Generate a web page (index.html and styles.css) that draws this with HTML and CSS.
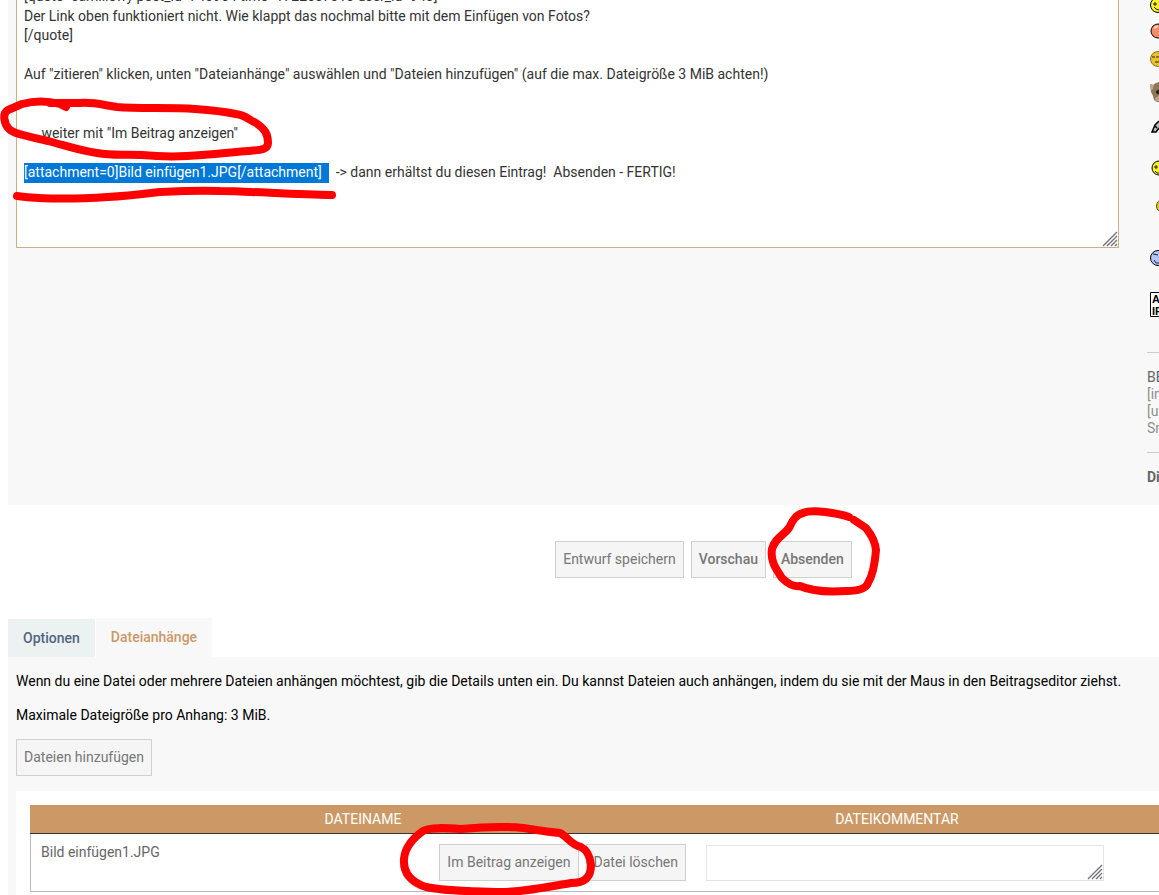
FILE: index.html
```html
<!DOCTYPE html>
<html lang="de">
<head>
<meta charset="utf-8">
<title>Antwort schreiben</title>
<link rel="stylesheet" href="styles.css">
</head>
<body>
<main class="page">
  <section class="editor">
    <div class="message">
      <textarea class="message-text" id="message" aria-label="Nachricht" spellcheck="false">[quote=camillewy post_id=743964 time=1722637313 user_id=943]
Der Link oben funktioniert nicht. Wie klappt das nochmal bitte mit dem Einfügen von Fotos?
[/quote]

Auf "zitieren" klicken, unten "Dateianhänge" auswählen und "Dateien hinzufügen" (auf die max. Dateigröße 3 MiB achten!)


     weiter mit "Im Beitrag anzeigen"

[attachment=0]Bild einfügen1.JPG[/attachment]  &nbsp;&nbsp;-&gt; dann erhältst du diesen Eintrag!  Absenden - FERTIG!</textarea>
      <svg class="grip" viewBox="0 0 16 16" aria-hidden="true"><path d="M1 15 15 1M5 15 15 5M9 15 15 9M13 15 15 13"/></svg>
    </div>
    <aside class="sidebar">
      <svg class="smilies" viewBox="0 0 12 340" role="img" aria-label="Smilies">
        <g stroke="#000">
          <circle cx="11" cy="5" r="7.5" fill="#f7f126"/>
          <circle cx="11" cy="31" r="7" fill="#f78a68"/>
          <circle cx="11" cy="59" r="7.5" fill="#e8c32c" stroke="#8a721c"/>
          <circle cx="12" cy="168" r="7" fill="#f7f126"/>
          <circle cx="16" cy="206" r="6.5" fill="#dfc51d" stroke="#5e5210"/>
          <circle cx="11" cy="258" r="7.5" fill="#b3c5fa"/>
          <path d="M3.500 292.500H14V316.500H3.500Z" fill="#fff"/>
        </g>
        <path d="M7 3h2v2H7zM7 7l2 2 3 1M8 166h2v2H8zM8 171l2 2h2M6 254l5 1M7 260l2 3h3M5 57h3M9 57h3M8 62h4" fill="none" stroke="#222"/>
        <path d="M7 28l4-2" stroke="#ffd4bd" stroke-width="2"/>
        <path d="M3 84l3 1 3-2 3-1v20H10l-3-2-1-4-2-4Z" fill="#8e7658"/>
        <path d="M3 84l4 1-1 4-2 1Z" fill="#b8a78c"/><circle cx="11" cy="92" r="2" fill="#241c15"/><path d="M8 98l4-2v5H9Z" fill="#c4a58a"/>
        <path d="M12 121l-4 4-3 7h4l3-4M8 126l2 2" fill="#bbb" stroke="#000" stroke-width="1.500"/>
        <text class="pixel-word" x="5" y="303">A</text><text class="pixel-word" x="5" y="315">IR</text>
      </svg>
      <div class="status">
        <span class="status-strong">BBCode</span><br>[img]<br>[url]<br>Smilies
      </div>
      <div class="history">Die</div>
    </aside>
  </section>

  <div class="actions">
    <button class="button" type="button">Entwurf speichern</button>
    <button class="button button-strong" type="button">Vorschau</button>
    <button class="button button-strong" type="submit">Absenden</button>
  </div>

  <nav class="tabs">
    <a class="tab" href="#options">Optionen</a>
    <a class="tab tab-active" href="#attachments">Dateianhänge</a>
  </nav>

  <section class="attachments" id="attachments">
    <p class="hint">Wenn du eine Datei oder mehrere Dateien anhängen möchtest, gib die Details unten ein. Du kannst Dateien auch anhängen, indem du sie mit der Maus in den Beitragseditor ziehst.</p>
    <p class="hint">Maximale Dateigröße pro Anhang: 3 MiB.</p>
    <button class="button button-add" type="button">Dateien hinzufügen</button>
    <div class="files">
      <table class="file-table">
        <colgroup><col class="col-name"><col class="col-comment"><col></colgroup>
        <thead>
          <tr><th>DATEINAME</th><th>DATEIKOMMENTAR</th><th></th></tr>
        </thead>
        <tbody>
          <tr>
            <td>
              <div class="file">
                <span class="file-name">Bild einfügen1.JPG</span>
                <div class="file-actions">
                  <button class="button" type="button">Im Beitrag anzeigen</button>
                  <button class="button" type="button">Datei löschen</button>
                </div>
              </div>
            </td>
            <td>
              <div class="comment">
                <textarea class="comment-text" aria-label="Dateikommentar"></textarea>
                <svg class="grip" viewBox="0 0 16 16" aria-hidden="true"><path d="M1 15 15 1M5 15 15 5M9 15 15 9M13 15 15 13"/></svg>
              </div>
            </td>
            <td></td>
          </tr>
        </tbody>
      </table>
    </div>
  </section>

  <svg class="marker" width="900" height="895" viewBox="0 0 900 895" aria-hidden="true">
    <path d="M66 107 60 104C45 100 33 101 22 104L8 110C2 113 4 124 9 129C14 134 27 136 48 141C67 146 81 151 97 153C114 156 126 154 142 155C163 157 181 157 202 155C221 154 234 152 248 151C260 150 268 150 268 143C268 134 265 129 256 123C248 119 245 115 236 114C222 111 210 110 195 109C170 107 140 109 117 107C103 105 94 102 80 103L50 103"/>
    <path d="M17 196C40 199 78 199 108 197C128 196 143 194 160 192C180 191 200 190 220 191C250 191 295 195 332 195"/>
    <path d="M849 517C838 513 812 509 803 513C797 514 792 521 789 528C783 536 775 538 772 549C770 561 776 569 782 578C788 584 794 587 800 586C811 591 830 592 846 591C858 591 866 589 868 583C873 575 875 563 876 550C875 540 870 533 866 528L854 520"/>
    <path d="M461 829C446 828 430 827 423 831C416 836 405 846 404 859C403 873 411 882 426 887C444 891 465 891 495 892C520 893 547 887 571 883C584 883 591 878 591 865C590 856 587 850 581 847C571 845 567 836 560 833C548 832 536 830 523 828C503 826 481 827 461 829"/>
  </svg>
</main>
<script src="script.js"></script>
</body>
</html>
```
FILE: styles.css
```css
* {
  box-sizing: border-box;
}

body {
  margin: 0;
  overflow: hidden;
  background: #fff;
  color: #000;
  font-family: Roboto, "Liberation Sans", sans-serif;
  font-size: 14px;
}

.page {
  position: relative;
  padding-left: 8px;
}

.editor {
  display: flex;
  gap: 28px;
  height: 505px;
  padding-left: 8px;
  background: #f8f8f8;
  overflow: hidden;
}

.message {
  position: relative;
  flex: 1;
  align-self: flex-start;
  margin-top: -20px;
}

.message-text {
  display: block;
  width: 100%;
  height: 268px;
  padding: 6px 7px;
  border: 1px solid #d0ad88;
  background: #fff;
  color: #333;
  font: 14px/1.4 Roboto, "Liberation Sans", sans-serif;
  outline: none;
  overflow: hidden;
  resize: none;
}

.message-text::selection {
  background: #0078d7;
  color: #fff;
}

.grip {
  position: absolute;
  right: 1px;
  bottom: 1px;
  width: 16px;
  height: 16px;
  fill: none;
  stroke: #74747c;
  stroke-width: 1.4;
}

.sidebar {
  flex: 0 0 12px;
  overflow: hidden;
  color: #8f8f8f;
  white-space: nowrap;
}

.smilies {
  display: block;
  width: 12px;
  height: 340px;
}

.pixel-word {
  font: bold 11px "Liberation Sans", sans-serif;
}

.status {
  margin-top: 12px;
  padding: 16px 0 15px;
  border-top: 1px solid #ccc;
  border-bottom: 1px solid #ccc;
  line-height: 17px;
}

.status-strong {
  color: #666;
}

.history {
  padding-top: 16px;
  color: #666;
  font-weight: 700;
  line-height: 17px;
}

.actions {
  display: flex;
  justify-content: center;
  gap: 7px;
  padding: 36px 0 40px 240px;
}

.button {
  height: 37px;
  padding: 0 7px 2px;
  border: 1px solid #d0d0d0;
  background: #f5f5f5;
  color: #777;
  font: 14px/20px Roboto, "Liberation Sans", sans-serif;
  white-space: nowrap;
}

.button-strong {
  font-weight: 500;
}

.tabs {
  display: flex;
  align-items: flex-end;
  gap: 1px;
}

.tab {
  padding: 10px 15px;
  background: #ecf1f2;
  color: #536482;
  font-weight: 500;
  line-height: 18px;
  text-decoration: none;
}

.tab-active {
  padding-bottom: 11px;
  background: #f8f8f8;
  color: #cc9966;
}

.attachments {
  padding: 16px 0 0 8px;
  background: #f8f8f8;
}

.hint {
  margin: 0 0 17px;
  line-height: 17px;
}

.button-add {
  display: block;
  margin-top: -2px;
}

.files {
  margin-top: 15px;
  padding: 14px 0 16px 14px;
  background: #fff;
}

.file-table {
  width: 100%;
  border-collapse: separate;
  border-spacing: 0;
  table-layout: fixed;
}

.col-name {
  width: 666px;
}

.col-comment {
  width: 418px;
}

.file-table th {
  height: 29px;
  padding: 0 16px 0 0;
  border-bottom: 1px solid #333;
  background: #cc9966;
  color: #fff;
  font-weight: 400;
}

.file-table th:first-child {
  padding: 0;
}

.file-table td {
  height: 58px;
  padding: 10px;
  border-bottom: 1px solid #bbb;
  color: #666;
  vertical-align: top;
}

.file-table td:first-child {
  border-left: 1px solid #bbb;
}

.file {
  display: flex;
  justify-content: space-between;
}

.file-name {
  line-height: 17px;
}

.file-actions {
  display: flex;
  gap: 7px;
}

.comment {
  position: relative;
}

.comment-text {
  display: block;
  width: 100%;
  height: 36px;
  margin-top: 1px;
  border: 1px solid #e4e4e4;
  background: #fff;
  resize: none;
}

.marker {
  position: absolute;
  top: 0;
  left: 0;
  fill: none;
  stroke: #f00;
  stroke-width: 8;
  stroke-linecap: round;
  stroke-linejoin: round;
  pointer-events: none;
}
```
FILE: script.js
```js
const message = document.getElementById("message");
const start = message.value.indexOf("[attachment=0]");
const end = message.value.indexOf("[/attachment]") + "[/attachment]  ".length;

message.focus({ preventScroll: true });
message.setSelectionRange(start, end);
message.scrollTop = 0;
```
